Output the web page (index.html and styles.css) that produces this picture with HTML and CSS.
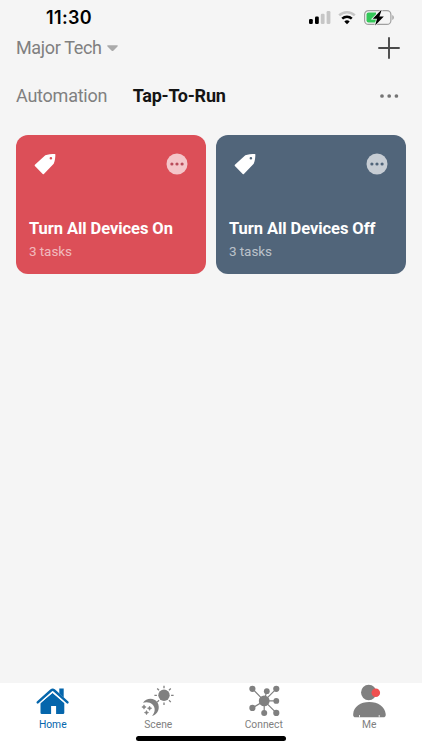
FILE: index.html
```html
<!DOCTYPE html>
<html lang="en">
<head>
<meta charset="utf-8">
<title>Tap-To-Run</title>
<link rel="stylesheet" href="styles.css">
</head>
<body>
<div class="screen">
  <div class="status">
    <span class="clock">11:30</span>
    <svg class="status-icons" width="90" height="20" viewBox="0 0 90 20">
      <rect x="1" y="11" width="3.8" height="5" rx="1.2"/>
      <rect x="7" y="8.6" width="3.8" height="7.4" rx="1.2"/>
      <rect x="12.8" y="5.8" width="3.8" height="10.2" rx="1.2" fill="#c6c6c6"/>
      <rect x="18.6" y="3" width="3.8" height="13" rx="1.2" fill="#c6c6c6"/>
      <g fill="none" stroke-width="2.5">
        <path d="M31.2 7.3a11.2 11.2 0 0 1 15.6 0" stroke="#c6c6c6"/>
        <path d="M34.2 10.7a7 7 0 0 1 9.6 0" stroke="#000"/>
      </g>
      <path d="M39 16.3l-2.7-2.8a4 4 0 0 1 5.4 0z"/>
      <rect x="56.6" y="2.6" width="26.3" height="13.8" rx="4" fill="none" stroke="#a0a0a0" stroke-width="1.2"/>
      <path d="M84.3 7v5c2-.7 2-4.300 0-5z" fill="#a0a0a0"/>
      <path d="M60.500 4.500h7.500v10h-7.500a2 2 0 0 1-2-2v-6a2 2 0 0 1 2-2z" fill="#34c759"/>
      <path d="M73 2.300L64.700 10.700h4.300l-1.900 6.700 8.700-9h-4.400l2.200-6.100z" stroke="#f5f5f5" stroke-width="1.600" paint-order="stroke"/>
    </svg>
  </div>

  <header class="header">
    <div class="home-name">Major Tech
      <svg width="11" height="7" viewBox="0 0 11 7"><path d="M1 .3h9c.8 0 1 .7.500 1.200L6.300 5.700c-.5.500-1.100.5-1.600 0L.5 1.500C0 1 .2.3 1 .3z" fill="#aaa"/></svg>
    </div>
    <svg width="22" height="22" viewBox="0 0 22 22"><path d="M11 1v20M1 11h20" stroke="#4a4a4a" stroke-width="1.900" stroke-linecap="round"/></svg>
  </header>

  <nav class="tabs">
    <span class="tab">Automation</span>
    <span class="tab tab-active">Tap-To-Run</span>
    <svg class="more" width="20" height="6" viewBox="0 0 20 6" fill="#747474"><circle cx="3" cy="3" r="1.850"/><circle cx="10.200" cy="3" r="1.850"/><circle cx="17.400" cy="3" r="1.850"/></svg>
  </nav>

  <main class="cards">
    <article class="card card-on">
      <div class="card-top">
        <svg width="22" height="22" viewBox="0 0 22 22"><path d="M.9 11.700L11.300 2.300C13.500 1.100 18 .9 20.700.9c.5 0 .7.300.7.700-.1 3-.5 7.300-1.700 9.100L9.900 20.900q-.6.600-1.200 0L.9 12.900q-.6-.6 0-1.200zM16.900 4a1.300 1.300 0 1 0 0 2.600 1.300 1.300 0 0 0 0-2.600z" fill="#fff" fill-rule="evenodd"/></svg>
        <svg width="22" height="22" viewBox="0 0 22 22"><circle class="dot-back" cx="11" cy="11" r="10.500"/><g class="dots"><circle cx="5.900" cy="11" r="1.600"/><circle cx="11" cy="11" r="1.600"/><circle cx="16.100" cy="11" r="1.600"/></g></svg>
      </div>
      <h2 class="card-title">Turn All Devices On</h2>
      <p class="card-sub">3 tasks</p>
    </article>
    <article class="card card-off">
      <div class="card-top">
        <svg width="22" height="22" viewBox="0 0 22 22"><path d="M.9 11.700L11.300 2.300C13.500 1.100 18 .9 20.700.9c.5 0 .7.300.7.700-.1 3-.5 7.300-1.700 9.100L9.900 20.900q-.6.600-1.200 0L.9 12.900q-.6-.6 0-1.200zM16.900 4a1.300 1.300 0 1 0 0 2.600 1.300 1.300 0 0 0 0-2.600z" fill="#fff" fill-rule="evenodd"/></svg>
        <svg width="22" height="22" viewBox="0 0 22 22"><circle class="dot-back" cx="11" cy="11" r="10.500"/><g class="dots"><circle cx="5.900" cy="11" r="1.600"/><circle cx="11" cy="11" r="1.600"/><circle cx="16.100" cy="11" r="1.600"/></g></svg>
      </div>
      <h2 class="card-title">Turn All Devices Off</h2>
      <p class="card-sub">3 tasks</p>
    </article>
  </main>

  <footer class="bottom">
    <nav class="nav">
      <div class="nav-item nav-active">
        <svg width="36" height="36" viewBox="0 0 36 36">
          <path d="M5.500 20L17.500 10l11.800 10v9.700q0 1.300-1.300 1.300h-6.900v-8h-5v8H6.800q-1.300 0-1.300-1.300z"/>
          <path d="M2.700 19.400L16 7.500q1.700-1.400 3.300 0L32.500 19.400" fill="none" stroke="currentColor" stroke-width="2.400" stroke-linecap="round"/>
          <path d="M24.300 5.600h4.400v9l-4.400-4z"/>
          <path d="M4.800 20.400L17.600 9.100l12.800 11.300" fill="none" stroke="#fff" stroke-width=".9"/>
        </svg>
        <span>Home</span>
      </div>
      <div class="nav-item">
        <svg width="36" height="36" viewBox="0 0 36 36">
          <circle cx="24" cy="12.300" r="5.700"/>
          <path d="M24 2.700v2.500M24 19.400v2.500M14.400 12.300h2.500M31.100 12.300h2.500M17.200 5.500l1.800 1.800M29 17.300l1.800 1.800M30.800 5.500L29 7.300M17.200 19.100l1.800-1.800" stroke="currentColor" stroke-width="1.300"/>
          <path d="M3 19.700C6 15 14 14 17.500 19.500C20.500 25 18 31.500 12 33C15.500 29 15.500 24.500 12.500 21.500C10 19 6.500 18.700 3 19.700z"/>
          <path d="M4 21.800l.7 1.500 1.500.7-1.500.7-.7 1.500-.7-1.500-1.500-.7 1.500-.7zM9.600 23l.7 1.500 1.500.7-1.500.7-.7 1.500-.7-1.500-1.500-.7 1.500-.7zM6.500 27.400l.7 1.500 1.500.7-1.500.7-.7 1.500-.7-1.500-1.500-.7 1.500-.7z" stroke="currentColor" stroke-width=".5"/>
        </svg>
        <span>Scene</span>
      </div>
      <div class="nav-item">
        <svg width="36" height="36" viewBox="0 0 36 36">
          <path d="M6.400 5.800L18.200 17.900 30.300 5.800M20.800 8.200l-2.600 9.700h12.100M6.400 24.900l11.800-7v12M18.200 17.900l12.100 12" fill="none" stroke="currentColor" stroke-width="1.200"/>
          <circle cx="18.200" cy="17.900" r="5.400"/><circle cx="6.400" cy="5.800" r="3.100"/><circle cx="20.800" cy="8.200" r="2.900"/><circle cx="30.300" cy="5.800" r="3.100"/><circle cx="30.300" cy="17.900" r="2.900"/><circle cx="6.400" cy="24.900" r="3.100"/><circle cx="18.200" cy="29.900" r="3"/><circle cx="30.300" cy="29.900" r="3.100"/>
        </svg>
        <span>Connect</span>
      </div>
      <div class="nav-item">
        <svg width="36" height="36" viewBox="0 0 36 36">
          <circle cx="17.700" cy="9.500" r="7.700"/>
          <path d="M2.200 31C2.700 23.500 9.500 19 18.300 19s15.600 4.500 16.400 12c.3 2.500-.7 3.300-2.700 3.300H4.800c-2 0-2.900-.8-2.600-3.300z"/>
          <path d="M8.500 32v2.300M28.200 32v2.300" stroke="#fff" stroke-width=".8"/>
          <circle cx="24.800" cy="9.800" r="4.300" fill="#f04f4f"/>
        </svg>
        <span>Me</span>
      </div>
    </nav>
    <div class="home-bar"></div>
  </footer>
</div>
</body>
</html>
```
FILE: styles.css
```css
* { box-sizing: border-box; margin: 0; padding: 0; }
body { font-family: Roboto, sans-serif; background: #f5f5f5; color: #808080; }
svg { display: block; flex: none; }
.screen { width: 422px; height: 750px; display: flex; flex-direction: column; overflow: hidden; }

.status { height: 34px; padding: 0 24px 0 46px; display: flex; justify-content: space-between; align-items: flex-start; }
.clock { font: 600 18px/22px Inter, sans-serif; letter-spacing: .35px; color: #000; padding-top: 7px; }
.status-icons { margin-top: 8px; }

.header { height: 28px; padding: 0 22px 0 16px; display: flex; align-items: center; justify-content: space-between; }
.home-name { display: flex; align-items: center; gap: 5px; font-size: 18px; line-height: 22px; letter-spacing: -.34px; }

.tabs { height: 68px; padding: 0 23px 0 16px; display: flex; align-items: center; gap: 25.500px; font-size: 18px; line-height: 22px; letter-spacing: -.24px; }
.tab-active { color: #141414; font-weight: 700; }
.more { margin-left: auto; }

.cards { flex: 1; padding: 5px 16px 0; display: grid; grid-template-columns: 1fr 1fr; gap: 10px; align-items: start; }
.card { height: 139px; border-radius: 12px; padding: 18px 18px 0 13px; white-space: nowrap; }
.card-on { background: #dc4f58; }
.card-off { background: #51657a; }
.card-top { display: flex; justify-content: space-between; padding-left: 5px; }
.dot-back { fill: #fff; opacity: .68; }
.card-on .dots { fill: #b94c5a; }
.card-off .dots { fill: #51657a; }
.card-title { margin-top: 44px; font-size: 16.500px; line-height: 20px; letter-spacing: -.07px; font-weight: 700; color: #fff; }
.card-sub { margin-top: 4px; font-size: 13.500px; line-height: 16px; letter-spacing: -.08px; color: rgba(255, 255, 255, .62); }

.bottom { height: 67px; background: #fff; }
.nav { display: grid; grid-template-columns: repeat(4, 1fr); height: 53px; }
.nav-item { display: flex; flex-direction: column; align-items: center; font-size: 10.300px; line-height: 12px; color: #808080; }
.nav-item svg { fill: currentColor; }
.nav-active { color: #0566ac; }
.home-bar { width: 150px; height: 5px; margin: 0 auto; border-radius: 3px; background: #000; }
```
